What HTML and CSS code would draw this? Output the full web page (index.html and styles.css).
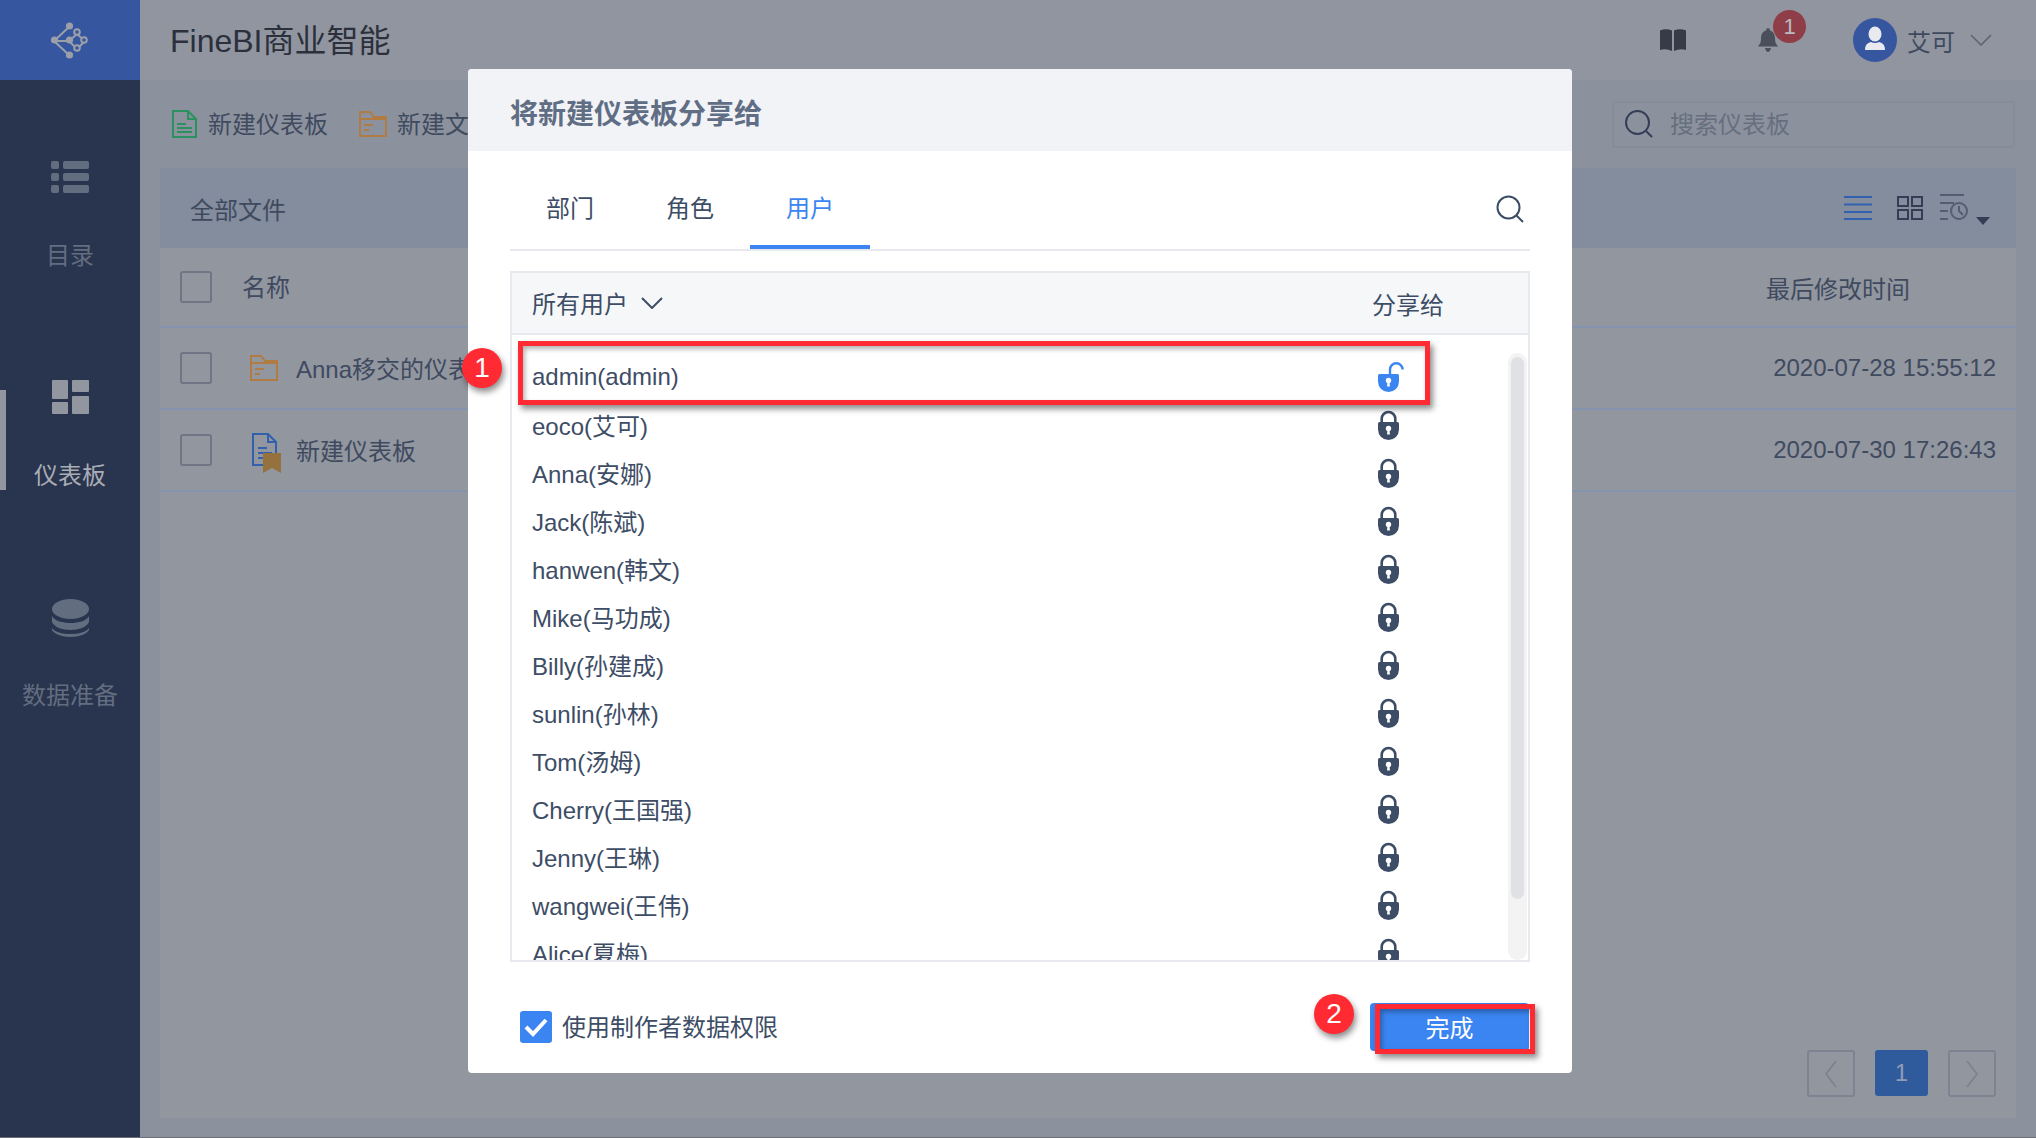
FILE: index.html

```html
<!DOCTYPE html>
<html lang="zh-CN">
<head>
  <meta charset="UTF-8">
  <title>FineBI商业智能</title>
  <link rel="stylesheet" href="styles.css">
</head>
<body>
  <svg class="defs" width="0" height="0">
    <symbol id="lock" viewBox="0 0 26 30">
      <path d="M3.700 13V8.800a6.800 6.800 0 0 1 13.600 0V13" fill="none" stroke="currentColor" stroke-width="2.600"/>
      <path d="M0 13.500q0-1.500 1.500-1.500h18q1.500 0 1.500 1.500v6a10.500 10.500 0 0 1-21 0z" fill="currentColor"/>
      <circle cx="10.500" cy="18.500" r="2.700" fill="#fff"/>
      <path d="M9.500 19h2l.4 5.500h-2.800z" fill="#fff"/>
    </symbol>
    <symbol id="unlock" viewBox="0 0 26 30">
      <path d="M12 12V7.500a6.300 6.300 0 0 1 12.600 0" fill="none" stroke="currentColor" stroke-width="2.400"/>
      <path d="M0 13.500q0-1.500 1.500-1.500h18q1.500 0 1.500 1.500v6a10.500 10.500 0 0 1-21 0z" fill="currentColor"/>
      <circle cx="10.500" cy="18.500" r="2.700" fill="#fff"/>
      <path d="M9.500 19h2l.4 5.500h-2.800z" fill="#fff"/>
    </symbol>
    <symbol id="folder" viewBox="0 0 28 26">
      <path d="M1 25V1h10l4 5h12v19zM1 8h26" fill="none" stroke="currentColor" stroke-width="2"/>
      <path d="M5 13h9v2H5zM5 18h5v2H5z" fill="currentColor"/>
    </symbol>
  </svg>

  <div class="app">
    <aside class="sidebar">
      <div class="logo">
        <svg width="38" height="38" viewBox="0 0 38 38">
          <g stroke="#9a9fa9" stroke-width="2" fill="none">
            <path d="M18 6 3 20l15 14M3 20l15 0M18 20l8-7 8 7-8 8-8-8"/>
            <circle cx="26" cy="11" r="2.800" fill="#3656a0"/>
            <circle cx="33" cy="19" r="2.800" fill="#3656a0"/>
            <circle cx="26" cy="27" r="2.800" fill="#3656a0"/>
          </g>
          <g fill="#9a9fa9">
            <circle cx="18.500" cy="5" r="3.600"/>
            <circle cx="3.500" cy="19" r="3.600"/>
            <circle cx="18.500" cy="34" r="3.600"/>
            <circle cx="18.500" cy="19" r="3.600"/>
          </g>
        </svg>
      </div>
      <a class="nav-item nav-catalog">
        <svg width="38" height="32" viewBox="0 0 38 32" fill="#636d80">
          <rect width="8" height="8" rx="2"/><rect x="12" width="26" height="8" rx="2"/>
          <rect y="12" width="8" height="8" rx="2"/><rect x="12" y="12" width="26" height="8" rx="2"/>
          <rect y="24" width="8" height="8" rx="2"/><rect x="12" y="24" width="26" height="8" rx="2"/>
        </svg>
        <span>目录</span>
      </a>
      <a class="nav-item nav-active">
        <svg width="37" height="34" viewBox="0 0 37 34" fill="#92969f">
          <rect width="16" height="19" rx="1"/><rect x="20" width="17" height="12" rx="1"/>
          <rect y="22" width="16" height="12" rx="1"/><rect x="20" y="16" width="17" height="18" rx="1"/>
        </svg>
        <span>仪表板</span>
      </a>
      <a class="nav-item nav-data">
        <svg width="37" height="38" viewBox="0 0 37 38" fill="#636d80">
          <ellipse cx="18.500" cy="10" rx="18.500" ry="10"/>
          <path d="M0 17c3 5 10 7 18.500 7S34 22 37 17v6c-2 5-10 8-18.500 8S2 28 0 23z"/>
          <path d="M0 29c3 4 10 6 18.500 6S34 33 37 29v2c-2 4-10 7-18.500 7S2 35 0 31z"/>
        </svg>
        <span>数据准备</span>
      </a>
    </aside>

    <div class="main">
      <header class="topbar">
        <h1>FineBI商业智能</h1>
        <div class="top-actions">
          <svg class="book" width="26" height="22" viewBox="0 0 26 22" fill="#363b47">
            <path d="M0 1.500Q6-1 12 1.500V22Q6 19 0 21zM14 1.500Q20-1 26 1.500V21Q20 19 14 22z"/>
          </svg>
          <div class="bell">
            <svg width="20" height="24" viewBox="0 0 20 24" fill="#4a4f5b">
              <path d="M10 0q2 0 2 2.500c4 1 5 5 5 8 0 4 1 5 3 8H0c2-3 3-4 3-8 0-3 1-7 5-8Q8 0 10 0zM7 20h6q-1 4-3 4t-3-4z"/>
            </svg>
            <span class="badge">1</span>
          </div>
          <div class="user">
            <svg width="44" height="44" viewBox="0 0 44 44">
              <circle cx="22" cy="22" r="22" fill="#3656a0"/>
              <ellipse cx="22" cy="16" rx="6.500" ry="7.500" fill="#e8eaf0"/>
              <path d="M12 32q0-7 6-8 4 2 8 0 6 1 6 8z" fill="#e8eaf0"/>
            </svg>
            <span>艾可</span>
            <svg class="chevron" width="22" height="12" viewBox="0 0 22 12" fill="none" stroke="#5d6371" stroke-width="1.600">
              <path d="M1 1l10 10L21 1"/>
            </svg>
          </div>
        </div>
      </header>

      <div class="content">
        <div class="toolbar">
          <a class="tool">
            <svg width="25" height="28" viewBox="0 0 25 28" fill="none" stroke="#2b9160" stroke-width="2">
              <path d="M1 1h15l8 8v18H1zM16 1v8h8M5 14h9M5 18h15M5 22h15"/>
            </svg>
            <span>新建仪表板</span>
          </a>
          <a class="tool tool-folder">
            <svg class="icon-folder" width="28" height="26"><use href="#folder"/></svg>
            <span>新建文件夹</span>
          </a>
          <div class="search">
            <svg width="28" height="28" viewBox="0 0 28 28" fill="none" stroke="#333e56" stroke-width="2">
              <circle cx="12.500" cy="12.500" r="11.500"/><path d="M21 21l6 6"/>
            </svg>
            <span>搜索仪表板</span>
          </div>
        </div>

        <div class="panel">
          <div class="strip">
            <span>全部文件</span>
            <div class="view-icons">
              <svg width="28" height="24" viewBox="0 0 28 24" stroke="#3160ae" stroke-width="2">
                <path d="M0 1h28M0 8.500h28M0 16h28M0 23h28"/>
              </svg>
              <svg width="26" height="24" viewBox="0 0 26 24" fill="none" stroke="#333e56" stroke-width="2">
                <rect x="1" y="1" width="10" height="9"/><rect x="15" y="1" width="10" height="9"/>
                <rect x="1" y="14" width="10" height="9"/><rect x="15" y="14" width="10" height="9"/>
              </svg>
              <svg class="clock-list" width="30" height="28" viewBox="0 0 30 28" fill="none" stroke="#555e70" stroke-width="2">
                <path d="M0 1h24M0 9h14M0 17h8M0 25h8"/>
                <circle cx="19" cy="17" r="8"/><path d="M19 12v5l4 4"/>
              </svg>
              <span class="caret"></span>
            </div>
          </div>

          <div class="table-row table-head">
            <span class="check"></span>
            <span class="head-name">名称</span>
            <span class="head-time">最后修改时间</span>
          </div>
          <div class="table-row">
            <span class="check"></span>
            <svg class="icon-folder row-icon" width="28" height="26"><use href="#folder"/></svg>
            <span class="file-name">Anna移交的仪表板</span>
            <span class="file-time">2020-07-28 15:55:12</span>
          </div>
          <div class="table-row">
            <span class="check"></span>
            <svg class="row-icon doc-icon" width="30" height="40" viewBox="0 0 30 40">
              <path d="M1 1h15l8 8v23H1zM16 1v8h8M6 15h9M6 20h14M6 25h10" fill="none" stroke="#3160ae" stroke-width="2"/>
              <path d="M11 20h18v20l-9-5-9 5z" fill="#95723d"/>
            </svg>
            <span class="file-name">新建仪表板</span>
            <span class="file-time">2020-07-30 17:26:43</span>
          </div>

          <div class="pager">
            <a class="page-btn">
              <svg width="12" height="28" viewBox="0 0 12 28" fill="none" stroke="#7d8391" stroke-width="2"><path d="M11 1 1 14l10 13"/></svg>
            </a>
            <a class="page-btn page-current">1</a>
            <a class="page-btn">
              <svg width="12" height="28" viewBox="0 0 12 28" fill="none" stroke="#7d8391" stroke-width="2"><path d="M1 1l10 13L1 27"/></svg>
            </a>
          </div>
        </div>
      </div>
    </div>

    <div class="modal">
      <div class="modal-title">将新建仪表板分享给</div>
      <div class="tabs">
        <a class="tab">部门</a>
        <a class="tab">角色</a>
        <a class="tab tab-active">用户</a>
        <svg class="tab-search" width="28" height="28" viewBox="0 0 28 28" fill="none" stroke="#3d4d66" stroke-width="2">
          <circle cx="12.500" cy="12.500" r="11"/><path d="M20.500 20.500l6.500 6.500"/>
        </svg>
      </div>

      <div class="user-box">
        <div class="user-head">
          <span class="all-users">所有用户</span>
          <svg width="22" height="12" viewBox="0 0 22 12" fill="none" stroke="#3d4d66" stroke-width="2"><path d="M1 1l10 10L21 1"/></svg>
          <span class="share-to">分享给</span>
        </div>
        <div class="user-list">
          <div class="user-row first-row"><span>admin(admin)</span><svg class="lock-open" width="26" height="30"><use href="#unlock"/></svg></div>
          <div class="user-row"><span>eoco(艾可)</span><svg class="lock" width="26" height="30"><use href="#lock"/></svg></div>
          <div class="user-row"><span>Anna(安娜)</span><svg class="lock" width="26" height="30"><use href="#lock"/></svg></div>
          <div class="user-row"><span>Jack(陈斌)</span><svg class="lock" width="26" height="30"><use href="#lock"/></svg></div>
          <div class="user-row"><span>hanwen(韩文)</span><svg class="lock" width="26" height="30"><use href="#lock"/></svg></div>
          <div class="user-row"><span>Mike(马功成)</span><svg class="lock" width="26" height="30"><use href="#lock"/></svg></div>
          <div class="user-row"><span>Billy(孙建成)</span><svg class="lock" width="26" height="30"><use href="#lock"/></svg></div>
          <div class="user-row"><span>sunlin(孙林)</span><svg class="lock" width="26" height="30"><use href="#lock"/></svg></div>
          <div class="user-row"><span>Tom(汤姆)</span><svg class="lock" width="26" height="30"><use href="#lock"/></svg></div>
          <div class="user-row"><span>Cherry(王国强)</span><svg class="lock" width="26" height="30"><use href="#lock"/></svg></div>
          <div class="user-row"><span>Jenny(王琳)</span><svg class="lock" width="26" height="30"><use href="#lock"/></svg></div>
          <div class="user-row"><span>wangwei(王伟)</span><svg class="lock" width="26" height="30"><use href="#lock"/></svg></div>
          <div class="user-row"><span>Alice(夏梅)</span><svg class="lock" width="26" height="30"><use href="#lock"/></svg></div>
          <div class="scroll-track"><div class="scroll-thumb"></div></div>
        </div>
      </div>

      <div class="modal-foot">
        <label class="data-perm">
          <span class="checked">
            <svg width="24" height="20" viewBox="0 0 24 20" fill="none" stroke="#fff" stroke-width="4"><path d="M2 10l7 7L22 3"/></svg>
          </span>
          <span class="perm-text">使用制作者数据权限</span>
        </label>
        <button class="done" type="button">完成</button>
      </div>
    </div>

    <!-- annotations drawn on top of the screenshot -->
    <div class="mark mark-row"></div>
    <div class="mark mark-done"></div>
    <div class="step step-1">1</div>
    <div class="step step-2">2</div>
  </div>
</body>
</html>
```

FILE: styles.css

```css
:root {
  --text: #3f4a5f;
  --modal-text: #3d4d66;
  --line: #8494ae;
  --blue: #3a85f1;
  --red: #ff2a32;
  --orange: #b07c44;
}

* {
  box-sizing: border-box;
}

html, body {
  margin: 0;
  height: 100%;
  overflow: hidden;
}

body {
  font-family: "Liberation Sans", "Noto Sans CJK SC", sans-serif;
  font-size: 24px;
  color: var(--text);
  background: #6f7075;
}

.defs {
  position: absolute;
}

.app {
  position: relative;
  display: flex;
  width: 2036px;
  height: 1137px;
}

/* sidebar */
.sidebar {
  width: 140px;
  flex-shrink: 0;
  background: #29344e;
}

.logo {
  height: 80px;
  background: #3656a0;
  display: flex;
  align-items: center;
  justify-content: center;
}

.nav-item {
  position: relative;
  display: flex;
  flex-direction: column;
  align-items: center;
  color: #636d80;
}

.nav-item span {
  line-height: 32px;
}

.nav-catalog {
  padding-top: 81px;
  gap: 47px;
}

.nav-active {
  margin-top: 108px;
  gap: 46px;
  color: #a9adb5;
}

.nav-active::before {
  content: "";
  position: absolute;
  left: 0;
  top: 10px;
  width: 6px;
  height: 100px;
  background: #92969f;
}

.nav-data {
  margin-top: 107px;
  gap: 43px;
}

/* main area */
.main {
  flex: 1;
  display: flex;
  flex-direction: column;
  background: #8c929d;
}

.topbar {
  height: 80px;
  display: flex;
  align-items: center;
  justify-content: space-between;
  padding-left: 30px;
  background: #91959f;
}

h1 {
  margin: 0 0 4px;
  font-size: 32px;
  font-weight: normal;
  color: #2b303c;
}

.top-actions {
  display: flex;
  align-items: center;
  padding-right: 44px;
}

.book {
  margin-right: 72px;
}

.bell {
  position: relative;
  display: flex;
  margin-right: 75px;
}

.badge {
  position: absolute;
  left: 15px;
  top: -18px;
  width: 33px;
  height: 33px;
  border-radius: 50%;
  background: #8f3d47;
  color: #b9bcc3;
  font-size: 22px;
  line-height: 33px;
  text-align: center;
}

.user {
  display: flex;
  align-items: center;
  gap: 10px;
}

.chevron {
  margin-left: 5px;
}

.content {
  flex: 1;
  display: flex;
  flex-direction: column;
  padding: 0 20px 19px;
}

.toolbar {
  height: 88px;
  display: flex;
  align-items: center;
  padding-left: 12px;
}

.tool {
  display: flex;
  align-items: center;
  gap: 11px;
  margin-right: 31px;
}

.tool span,
.search span {
  margin-bottom: 4px;
}

.tool-folder {
  gap: 10px;
}

.icon-folder {
  color: var(--orange);
}

.search {
  margin-left: auto;
  margin-right: 1px;
  width: 403px;
  height: 47px;
  display: flex;
  align-items: center;
  gap: 17px;
  padding-left: 11px;
  border: 2px solid #868c99;
  border-radius: 3px;
  color: #666f80;
}

.panel {
  flex: 1;
  display: flex;
  flex-direction: column;
  background: #92969f;
}

.strip {
  height: 80px;
  display: flex;
  align-items: center;
  justify-content: space-between;
  padding: 0 26px 0 30px;
  background: #838d9e;
}

.view-icons {
  display: flex;
  align-items: center;
  position: relative;
}

.view-icons svg:first-child {
  margin-right: 25px;
}

.view-icons svg:nth-child(2) {
  margin-right: 17px;
}

.clock-list {
  margin-right: 6px;
}

.caret {
  margin-top: 26px;
  border-left: 7px solid transparent;
  border-right: 7px solid transparent;
  border-top: 8px solid #333e56;
}

.table-row {
  height: 82px;
  display: flex;
  align-items: center;
  padding: 0 20px;
  border-bottom: 2px solid var(--line);
}

.table-head {
  height: 80px;
}

.check {
  width: 32px;
  height: 32px;
  flex-shrink: 0;
  border: 2px solid #6f7585;
  border-radius: 3px;
}

.head-name {
  margin: 0 0 4px 30px;
}

.head-time {
  margin-left: auto;
  margin-right: 86px;
}

.row-icon {
  margin-left: 38px;
  margin-right: 18px;
}

.doc-icon {
  margin-left: 40px;
  margin-right: 14px;
  margin-top: 6px;
}

.file-name {
  margin-bottom: 2px;
}

.file-time {
  margin-left: auto;
}

.pager {
  margin-top: auto;
  padding: 0 20px 21px 0;
  display: flex;
  justify-content: flex-end;
  align-items: flex-start;
  gap: 20px;
}

.page-btn {
  width: 48px;
  height: 47px;
  display: flex;
  align-items: center;
  justify-content: center;
  border: 2px solid #7d8391;
  border-radius: 3px;
}

.page-current {
  width: 53px;
  height: 46px;
  border: none;
  background: #2f5a9c;
  color: #8f9cb5;
}

/* share dialog */
.modal {
  position: absolute;
  left: 468px;
  top: 69px;
  width: 1104px;
  height: 1004px;
  display: flex;
  flex-direction: column;
  background: #fff;
  border-radius: 4px;
  color: var(--modal-text);
  overflow: hidden;
}

.modal-title {
  height: 82px;
  flex-shrink: 0;
  padding: 4px 0 0 42px;
  line-height: 84px;
  font-size: 28px;
  font-weight: bold;
  color: #5f6e84;
  background: #f2f3f7;
}

.tabs {
  height: 100px;
  flex-shrink: 0;
  margin: 0 42px;
  display: flex;
  align-items: stretch;
  border-bottom: 2px solid #e8e9ee;
}

.tab {
  width: 120px;
  padding-top: 40px;
  line-height: 36px;
  text-align: center;
}

.tab-active {
  color: var(--blue);
  border-bottom: 4px solid var(--blue);
}

.tab-search {
  margin: 44px 6px 0 auto;
}

.user-box {
  height: 691px;
  flex-shrink: 0;
  margin: 20px 42px 0;
  border: 2px solid #e8e9ee;
  display: flex;
  flex-direction: column;
}

.user-head {
  height: 62px;
  flex-shrink: 0;
  display: flex;
  align-items: center;
  gap: 13px;
  padding: 0 84px 0 20px;
  background: #f6f7f9;
  border-bottom: 2px solid #e8e9ee;
}

.all-users {
  margin-bottom: 2px;
}

.share-to {
  margin-left: auto;
}

.user-list {
  position: relative;
  flex: 1;
  padding-top: 16px;
  overflow: hidden;
}

.user-row {
  height: 48px;
  display: grid;
  grid-template-columns: 1fr 26px;
  align-items: center;
  padding: 0 124px 0 20px;
}

.user-row span {
  margin-bottom: 2px;
}

.first-row {
  height: 50px;
  padding-top: 2px;
}

.first-row span {
  margin-bottom: 0;
}

.lock {
  color: #3d4d66;
}

.lock-open {
  color: var(--blue);
}

.scroll-track {
  position: absolute;
  right: 1px;
  top: 18px;
  bottom: 0;
  width: 19px;
  padding: 4px 3px;
  background: #f3f3f3;
  border-radius: 10px;
}

.scroll-thumb {
  height: 542px;
  background: #e0e1e4;
  border-radius: 7px;
}

.modal-foot {
  flex: 1;
  display: flex;
  align-items: flex-start;
  justify-content: space-between;
  padding: 41px 43px 0 52px;
}

.data-perm {
  height: 48px;
  display: flex;
  align-items: center;
  gap: 10px;
}

.perm-text {
  margin-bottom: 4px;
}

.checked {
  width: 32px;
  height: 32px;
  display: flex;
  align-items: center;
  justify-content: center;
  background: var(--blue);
  border-radius: 3px;
}

.done {
  width: 159px;
  height: 48px;
  padding: 0 0 2px;
  border: none;
  border-radius: 4px;
  background: var(--blue);
  color: #fff;
  font: inherit;
}

/* annotations */
.mark {
  position: absolute;
  border: 5px solid var(--red);
  box-shadow: 3px 4px 6px rgba(0, 0, 0, 0.45), inset 2px 3px 5px rgba(0, 0, 0, 0.3);
}

.mark-row {
  left: 518px;
  top: 341px;
  width: 912px;
  height: 64px;
}

.mark-done {
  left: 1375px;
  top: 1004px;
  width: 160px;
  height: 50px;
}

.step {
  position: absolute;
  width: 40px;
  height: 40px;
  border-radius: 50%;
  background: var(--red);
  color: #fff;
  font-size: 28px;
  line-height: 40px;
  text-align: center;
  box-shadow: 2px 4px 6px rgba(0, 0, 0, 0.45);
}

.step-1 {
  left: 462px;
  top: 348px;
}

.step-2 {
  left: 1314px;
  top: 994px;
}
```
